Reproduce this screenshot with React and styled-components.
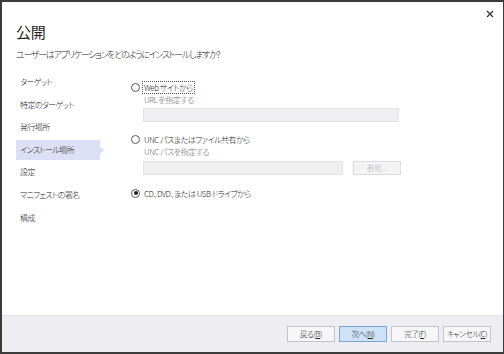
import React from "react";
import styled, { createGlobalStyle } from "styled-components";

const Global = createGlobalStyle`
  html, body {
    margin: 0;
    padding: 0;
    background: #ffffff;
  }
  body {
    font-family: "Noto Sans CJK JP", "Noto Sans", sans-serif;
    font-feature-settings: "palt";
    font-weight: 300;
    color: #1e1e1e;
  }
`;

const Window = styled.div`
  position: relative;
  box-sizing: border-box;
  width: 504px;
  height: 354px;
  border-style: solid;
  border-color: #3b3b3b;
  border-width: 2px 1px 2px 2px;
  display: flex;
  flex-direction: column;
  background: #ffffff;
`;

const Close = styled.div`
  position: absolute;
  top: 6px;
  right: 7px;
  width: 12px;
  height: 12px;
  display: flex;
  align-items: center;
  justify-content: center;
`;

const Header = styled.div`
  padding: 20px 0 0 14px;
`;

const Title = styled.div`
  font-size: 15px;
  line-height: 20px;
  font-weight: 400;
  letter-spacing: -0.3px;
`;

const Subtitle = styled.div`
  margin-top: 6px;
  font-size: 9px;
  line-height: 14px;
  letter-spacing: -1.3px;
`;

const Main = styled.div`
  flex: 1;
  display: flex;
  padding-top: 8px;
`;

const Nav = styled.div`
  width: 90px;
  margin-left: 14px;
  padding-top: 2px;
  display: flex;
  flex-direction: column;
  gap: 2.6px;
`;

const NavItem = styled.div`
  position: relative;
  height: 20px;
  line-height: 20px;
  padding-left: 4px;
  width: 80px;
  font-size: 8px;
  letter-spacing: -0.6px;
  background: ${(p) => (p.$active ? "#dde0f4" : "transparent")};

  &::after {
    content: "";
    display: ${(p) => (p.$active ? "block" : "none")};
    position: absolute;
    right: -4px;
    top: 6px;
    border-left: 4px solid #dde0f4;
    border-top: 4px solid transparent;
    border-bottom: 4px solid transparent;
  }
`;

const Content = styled.div`
  margin-left: 25px;
  padding-top: 11px;
  display: flex;
  flex-direction: column;
`;

const Option = styled.div`
  display: flex;
  flex-direction: column;
  margin-bottom: ${(p) => p.$gap || 0}px;
`;

const RadioRow = styled.div`
  display: flex;
  align-items: center;
  height: 12px;
  font-size: 8px;
  letter-spacing: -0.5px;
`;

const Radio = styled.span`
  box-sizing: border-box;
  width: 9px;
  height: 9px;
  border-radius: 50%;
  border: 1px solid #5a5a5a;
  margin-right: 3px;
  display: flex;
  align-items: center;
  justify-content: center;

  &::after {
    content: "";
    display: ${(p) => (p.$checked ? "block" : "none")};
    width: 4px;
    height: 4px;
    border-radius: 50%;
    background: #1e1e1e;
  }
`;

const Label = styled.span`
  line-height: 11px;
  outline: ${(p) => (p.$focus ? "1px dotted #555" : "none")};
  padding: 0 1px;
`;

const Hint = styled.div`
  margin: 1px 0 ${(p) => p.$after || 2}px 13px;
  height: 12px;
  line-height: 12px;
  font-size: 8px;
  letter-spacing: -0.5px;
  color: #727272;
`;

const FieldRow = styled.div`
  display: flex;
  gap: 10px;
  margin-left: 12px;
`;

const Input = styled.div`
  box-sizing: border-box;
  width: ${(p) => p.$w}px;
  height: 14px;
  background: #efeff2;
  border: 1px solid #e2e2e8;
`;

const Browse = styled.div`
  box-sizing: border-box;
  width: 48px;
  height: 14px;
  background: #f4f4f6;
  border: 1px solid #dadade;
  color: #a6a6a6;
  font-size: 7.5px;
  line-height: 12px;
  text-align: center;
`;

const Footer = styled.div`
  height: 36px;
  background: #eeedf2;
  border-top: 1px solid #e4e4ea;
  display: flex;
  justify-content: flex-end;
  align-items: center;
  gap: 4px;
  padding-right: 12px;
`;

const Button = styled.div`
  box-sizing: border-box;
  width: 48px;
  height: 16px;
  border: 1px solid ${(p) => (p.$primary ? "#7ba5d3" : "#c4c4c8")};
  background: ${(p) => (p.$primary ? "#cde2f5" : "#f7f7f9")};
  font-size: 7.5px;
  letter-spacing: -0.4px;
  line-height: 14px;
  white-space: nowrap;
  text-align: center;

  u {
    text-decoration: underline;
  }
`;

const navItems = [
  "ターゲット",
  "特定のターゲット",
  "発行場所",
  "インストール場所",
  "設定",
  "マニフェストの署名",
  "構成",
];

export default function App() {
  return (
    <>
      <Global />
      <Window>
        <Close>
          <svg width="8" height="8" viewBox="0 0 8 8">
            <path d="M1 1L7 7M7 1L1 7" stroke="#333" strokeWidth="1.3" />
          </svg>
        </Close>
        <Header>
          <Title>公開</Title>
          <Subtitle>ユーザーはアプリケーションをどのようにインストールしますか?</Subtitle>
        </Header>
        <Main>
          <Nav>
            {navItems.map((name) => (
              <NavItem key={name} $active={name === "インストール場所"}>
                {name}
              </NavItem>
            ))}
          </Nav>
          <Content>
            <Option $gap={11}>
              <RadioRow>
                <Radio />
                <Label $focus>Web サイトから</Label>
              </RadioRow>
              <Hint>URL を指定する</Hint>
              <FieldRow>
                <Input $w={256} />
              </FieldRow>
            </Option>
            <Option $gap={12}>
              <RadioRow>
                <Radio />
                <Label>UNC パスまたはファイル共有から</Label>
              </RadioRow>
              <Hint $after={3}>UNC パスを指定する</Hint>
              <FieldRow>
                <Input $w={200} />
                <Browse>参照...</Browse>
              </FieldRow>
            </Option>
            <Option>
              <RadioRow>
                <Radio $checked />
                <Label>CD、DVD、または USB ドライブから</Label>
              </RadioRow>
            </Option>
          </Content>
        </Main>
        <Footer>
          <Button>
            戻る(<u>B</u>)
          </Button>
          <Button $primary>
            次へ(<u>N</u>)
          </Button>
          <Button>
            完了(<u>F</u>)
          </Button>
          <Button>
            キャンセル(<u>C</u>)
          </Button>
        </Footer>
      </Window>
    </>
  );
}
